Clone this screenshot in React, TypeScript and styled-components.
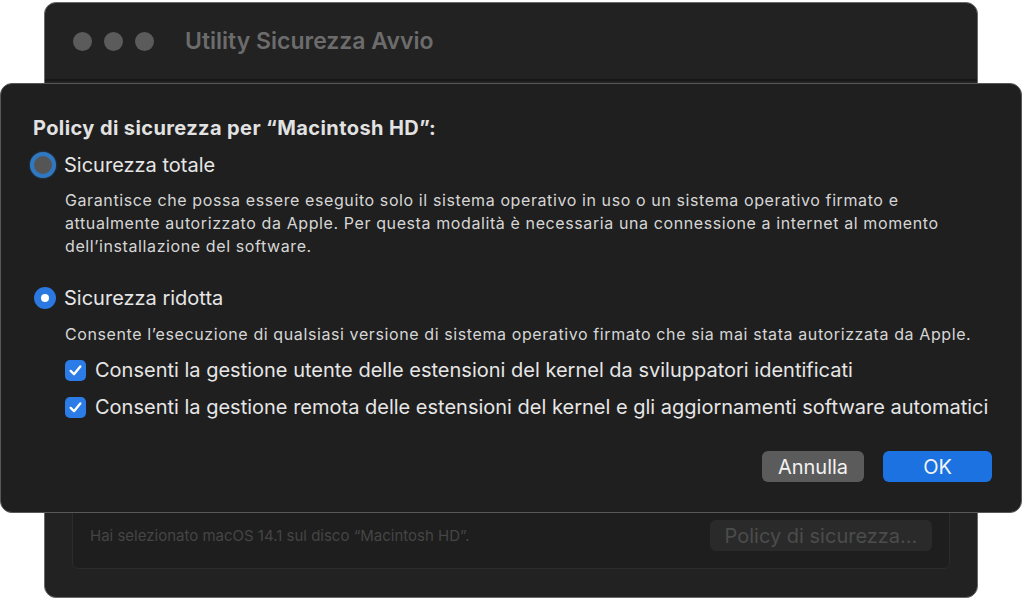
import React from "react";
import styled, { createGlobalStyle } from "styled-components";

const GlobalStyle = createGlobalStyle`
  html, body {
    margin: 0;
    padding: 0;
    background: #ffffff;
    font-family: Inter, "Liberation Sans", sans-serif;
    -webkit-font-smoothing: antialiased;
  }
`;

const Stage = styled.div`
  position: relative;
  width: 1024px;
  height: 600px;
  overflow: hidden;
  background: #ffffff;
`;

const BackWindow = styled.div`
  position: absolute;
  left: 44px;
  top: 2px;
  width: 932px;
  height: 594px;
  background: #222222;
  border: 1px solid #6a6a6a;
  border-radius: 12px;
  display: flex;
  flex-direction: column;
  overflow: hidden;
`;

const TitleBar = styled.div`
  height: 76px;
  display: flex;
  align-items: center;
  padding-left: 28px;
  gap: 12px;
  border-bottom: 2px solid #171717;
`;

const Light = styled.span`
  width: 19px;
  height: 19px;
  border-radius: 50%;
  background: #5b5b5b;
`;

const Title = styled.div`
  margin-left: 19px;
  font-size: 23px;
  font-weight: 600;
  color: #6c6c6c;
`;

const WindowBody = styled.div`
  flex: 1;
  display: flex;
  flex-direction: column;
  justify-content: flex-end;
  padding: 0 27px 28px 27px;
`;

const InfoBox = styled.div`
  height: 100px;
  border: 1px solid #2c2c2c;
  border-radius: 6px;
  background: #1e1e1e;
  display: flex;
  align-items: flex-end;
  justify-content: space-between;
  padding: 0 17px 17px 17px;
`;

const InfoText = styled.div`
  font-size: 15px;
  color: #454545;
  padding-bottom: 6px;
`;

const GhostButton = styled.div`
  width: 222px;
  height: 31px;
  border-radius: 6px;
  background: #2a2a2a;
  color: #4c4c4c;
  font-size: 20px;
  display: flex;
  align-items: center;
  justify-content: center;
`;

const Sheet = styled.div`
  position: absolute;
  left: 0;
  top: 83px;
  width: 1020px;
  height: 428px;
  background: #1f1f1f;
  border: 1px solid #585858;
  border-radius: 12px;
  display: flex;
  flex-direction: column;
`;

const SheetInner = styled.div`
  padding: 32px 32px 0 32px;
  display: flex;
  flex-direction: column;
`;

const Heading = styled.div`
  font-size: 20px;
  font-weight: 700;
  letter-spacing: 0.4px;
  color: #e2e2e2;
  line-height: 24px;
`;

const OptionRow = styled.div<{ $top: number }>`
  display: flex;
  align-items: center;
  gap: 8px;
  margin-top: ${(p) => p.$top}px;
  height: 28px;
`;

const OptionLabel = styled.div`
  font-size: 20px;
  color: #e6e6e6;
`;

const RadioFocused = styled.span`
  width: 18px;
  height: 18px;
  border-radius: 50%;
  background: #555555;
  border: 4px solid #2f78c2;
  box-shadow: 0 0 2px rgba(60, 140, 220, 0.6);
  margin-left: -3px;
  flex: none;
`;

const RadioOn = styled.span`
  width: 22px;
  height: 22px;
  border-radius: 50%;
  background: #2a78e0;
  display: flex;
  align-items: center;
  justify-content: center;
  margin-left: 1px;
  flex: none;
  &::after {
    content: "";
    width: 8px;
    height: 8px;
    border-radius: 50%;
    background: #ffffff;
  }
`;

const Description = styled.div<{ $top: number }>`
  margin-top: ${(p) => p.$top}px;
  margin-left: 32px;
  font-size: 16px;
  letter-spacing: 0.6px;
  line-height: 23px;
  color: #d6d6d6;
  white-space: nowrap;
`;

const CheckRow = styled.div<{ $top: number }>`
  display: flex;
  align-items: center;
  gap: 9px;
  margin-top: ${(p) => p.$top}px;
  margin-left: 32px;
  height: 28px;
`;

const CheckBox = styled.span`
  width: 21px;
  height: 21px;
  border-radius: 5px;
  background: #2b7ce6;
  display: flex;
  align-items: center;
  justify-content: center;
  flex: none;
`;

const CheckLabel = styled.div`
  font-size: 20px;
  color: #e6e6e6;
  white-space: nowrap;
`;

const Actions = styled.div`
  display: flex;
  justify-content: flex-end;
  gap: 19px;
  margin-top: 30px;
  padding-right: 29px;
`;

const Button = styled.div<{ $primary?: boolean }>`
  height: 31px;
  width: ${(p) => (p.$primary ? 109 : 102)}px;
  border-radius: 6px;
  background: ${(p) => (p.$primary ? "#1b72e0" : "#5b5b5b")};
  color: #f2f2f2;
  font-size: 20px;
  display: flex;
  align-items: center;
  justify-content: center;
`;

const Check = () => (
  <svg width="15" height="15" viewBox="0 0 14 14">
    <path
      d="M2.5 7.4 L5.6 10.5 L11.5 3.2"
      fill="none"
      stroke="#ffffff"
      strokeWidth="2.2"
      strokeLinecap="round"
      strokeLinejoin="round"
    />
  </svg>
);

export default function App() {
  return (
    <>
      <GlobalStyle />
      <Stage>
        <BackWindow>
          <TitleBar>
            <Light />
            <Light />
            <Light />
            <Title>Utility Sicurezza Avvio</Title>
          </TitleBar>
          <WindowBody>
            <InfoBox>
              <InfoText>Hai selezionato macOS 14.1 sul disco “Macintosh HD”.</InfoText>
              <GhostButton>Policy di sicurezza...</GhostButton>
            </InfoBox>
          </WindowBody>
        </BackWindow>

        <Sheet>
          <SheetInner>
            <Heading>Policy di sicurezza per “Macintosh HD”:</Heading>
            <OptionRow $top={11}>
              <RadioFocused />
              <OptionLabel>Sicurezza totale</OptionLabel>
            </OptionRow>
            <Description $top={10}>
              Garantisce che possa essere eseguito solo il sistema operativo in uso o un sistema operativo firmato e
              <br />
              attualmente autorizzato da Apple. Per questa modalità è necessaria una connessione a internet al momento
              <br />
              dell’installazione del software.
            </Description>
            <OptionRow $top={26}>
              <RadioOn />
              <OptionLabel>Sicurezza ridotta</OptionLabel>
            </OptionRow>
            <Description $top={11}>
              Consente l’esecuzione di qualsiasi versione di sistema operativo firmato che sia mai stata autorizzata da Apple.
            </Description>
            <CheckRow $top={10}>
              <CheckBox>
                <Check />
              </CheckBox>
              <CheckLabel>Consenti la gestione utente delle estensioni del kernel da sviluppatori identificati</CheckLabel>
            </CheckRow>
            <CheckRow $top={9}>
              <CheckBox>
                <Check />
              </CheckBox>
              <CheckLabel>
                Consenti la gestione remota delle estensioni del kernel e gli aggiornamenti software automatici
              </CheckLabel>
            </CheckRow>
          </SheetInner>
          <Actions>
            <Button>Annulla</Button>
            <Button $primary>OK</Button>
          </Actions>
        </Sheet>
      </Stage>
    </>
  );
}
